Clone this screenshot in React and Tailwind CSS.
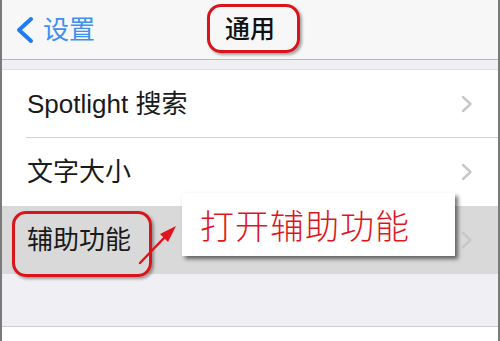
import React from 'react';

const font = { fontFamily: '"Liberation Sans", "Noto Sans CJK SC", sans-serif' };

const Chevron = () => (
  <svg width="12" height="18" viewBox="0 0 12 18" className="shrink-0">
    <path d="M2 2 L9.5 9 L2 16" fill="none" stroke="#c7c7cc" strokeWidth="2.4" strokeLinecap="round" strokeLinejoin="round" />
  </svg>
);

const Row = ({ label, active, last }) => (
  <div className={`relative flex items-center h-[68px] pl-[25px] pr-[25px] ${active ? 'bg-[#d9d9d9]' : 'bg-white'}`}>
    <span className="flex-1 text-[26px] text-[#1a1a1a] leading-none">{label}</span>
    <Chevron />
    {!last && <div className="absolute left-[24px] right-0 bottom-0 h-px bg-[#d2d2d6]" />}
  </div>
);

export default function App() {
  return (
    <div className="relative w-[500px] h-[341px] overflow-hidden bg-white border-l-2 border-r-2 border-[#7a7a7a]" style={font}>
      {/* nav bar */}
      <div className="flex items-center h-[60px] bg-[#f7f7f8] border-b border-[#b9b9bd] px-[12px]">
        <div className="flex items-center w-[120px]">
          <svg width="22" height="28" viewBox="0 0 22 28">
            <path d="M17 3 L5 14 L17 25" fill="none" stroke="#1c7cf4" strokeWidth="4" strokeLinecap="round" strokeLinejoin="round" />
          </svg>
          <span className="ml-[7px] text-[26px] text-[#3d8ff0] leading-none">设置</span>
        </div>
        <div className="flex-1 flex justify-center pr-[120px]">
          <span className="text-[25px] text-[#111] leading-none font-medium">通用</span>
        </div>
      </div>
      <div className="h-[10px] bg-[#efeff4] border-b border-[#e0e0e4]" />

      {/* list */}
      <div className="flex flex-col">
        <Row label="Spotlight 搜索" />
        <Row label="文字大小" last />
        <Row label="辅助功能" active last />
      </div>
      <div className="h-[53px] bg-[#efeff4] border-b border-[#cfcfd3]" />
      <div className="h-[12px] bg-white" />

      {/* annotations */}
      <div className="absolute left-[205px] top-[4px] w-[93px] h-[49px] rounded-[14px] border-[3px] border-[#d9141b] shadow-[2px_2px_3px_rgba(0,0,0,0.35)]" />
      <div className="absolute left-[10px] top-[211px] w-[140px] h-[66px] rounded-[14px] border-[3px] border-[#d9141b] shadow-[2px_2px_3px_rgba(0,0,0,0.35)]" />
      <svg className="absolute left-0 top-0" width="500" height="341" viewBox="0 0 500 341">
        <line x1="138" y1="263" x2="162" y2="238" stroke="#e0141b" strokeWidth="2.5" strokeLinecap="round" />
        <polygon points="174,226 158,234 166,242" fill="#e0141b" />
      </svg>
      <div className="absolute left-[180px] top-[193px] w-[273px] h-[63px] bg-white shadow-[3px_3px_4px_rgba(0,0,0,0.55)] flex items-center pl-[18px]">
        <span className="text-[34px] text-[#e0141b] leading-none tracking-[1px]" style={{ fontFamily: '"Noto Sans CJK SC", sans-serif', fontWeight: 300 }}>打开辅助功能</span>
      </div>
    </div>
  );
}
